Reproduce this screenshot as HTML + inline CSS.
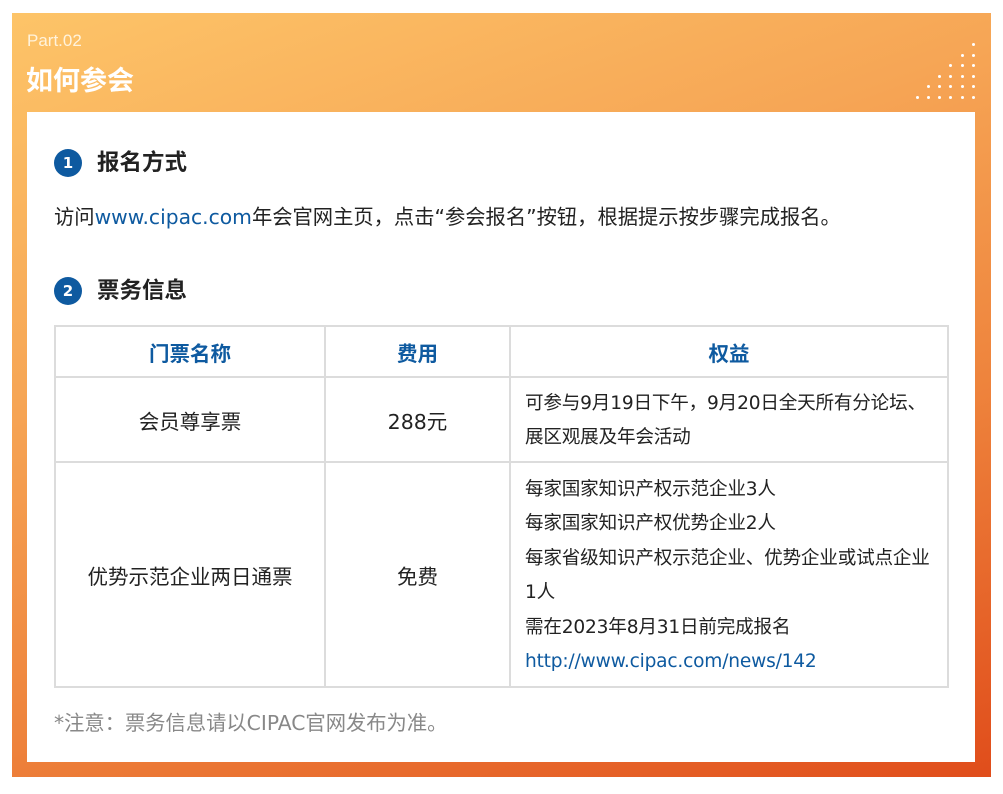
<!DOCTYPE html><html><head><meta charset="utf-8"><style>
*{margin:0;padding:0;box-sizing:border-box}
body{width:1003px;height:794px;background:#fff;position:relative;font-family:"DejaVu Sans","Noto Sans CJK SC",sans-serif;overflow:hidden}
.bg{position:absolute;left:12px;top:13px;width:979px;height:764px;background:linear-gradient(160deg,#fdc468 0%,#f6a555 35%,#ee833c 65%,#e04d1b 100%)}
.w{position:absolute;left:27px;top:112px;width:948px;height:650px;background:#fff}
.a{position:absolute;white-space:nowrap}
.dot{position:absolute;width:3px;height:3px;border-radius:50%;background:#fff}
.c{position:absolute;width:28px;height:28px;border-radius:50%;background:#0e5aa0;color:#fff;font-weight:bold;font-size:15px;text-align:center;line-height:28px}
table{position:absolute;left:54px;top:325px;border-collapse:collapse;width:895px}
td{border:2px solid #dcdcdc;font-size:20.5px;color:#222;text-align:center}
th{border:2px solid #dcdcdc;font-size:20.5px;color:#0e5aa0;height:51px;font-weight:bold}
.r{text-align:left;font-size:18.6px;line-height:34.5px;padding-left:14px;padding-top:3px;letter-spacing:-0.2px}
</style></head><body>
<div class="bg"></div>
<div class="a" style="left:27px;top:31px;font-size:17px;color:#fff3dc;font-family:'Liberation Sans Narrow','Liberation Sans',sans-serif">Part.02</div>
<div class="a" style="left:26px;top:59px;font-size:27px;font-weight:bold;color:#fff">如何参会</div>
<div id="d"></div>
<div class="w"></div>
<div class="c" style="left:54px;top:149px">1</div>
<div class="a" style="left:97px;top:145px;font-size:22.5px;font-weight:bold;color:#222">报名方式</div>
<div class="a" style="left:54px;top:200px;font-size:20.3px;color:#222">访问<span style="color:#0e5aa0">www.cipac.com</span>年会官网主页，点击“参会报名”按钮，根据提示按步骤完成报名。</div>
<div class="c" style="left:54px;top:277px">2</div>
<div class="a" style="left:97px;top:273px;font-size:22.5px;font-weight:bold;color:#222">票务信息</div>
<table>
<tr><th style="width:270px">门票名称</th><th style="width:185px">费用</th><th>权益</th></tr>
<tr style="height:85px"><td>会员尊享票</td><td>288元</td><td class="r">可参与9月19日下午，9月20日全天所有分论坛、<br>展区观展及年会活动</td></tr>
<tr style="height:225px"><td>优势示范企业两日通票</td><td>免费</td><td class="r">每家国家知识产权示范企业3人<br>每家国家知识产权优势企业2人<br>每家省级知识产权示范企业、优势企业或试点企业<br>1人<br>需在2023年8月31日前完成报名<br><span style="color:#0e5aa0">http://www.cipac.com/news/142</span></td></tr>
</table>
<div class="a" style="left:54px;top:706px;font-size:20.3px;color:#888">*注意：票务信息请以CIPAC官网发布为准。</div>
<script>
var h='';for(var r=0;r<6;r++){for(var k=0;k<=r;k++){h+='<div class="dot" style="left:'+(972-k*11.3)+'px;top:'+(43+r*10.6)+'px"></div>';}}
document.getElementById('d').innerHTML=h;
</script>
</body></html>
